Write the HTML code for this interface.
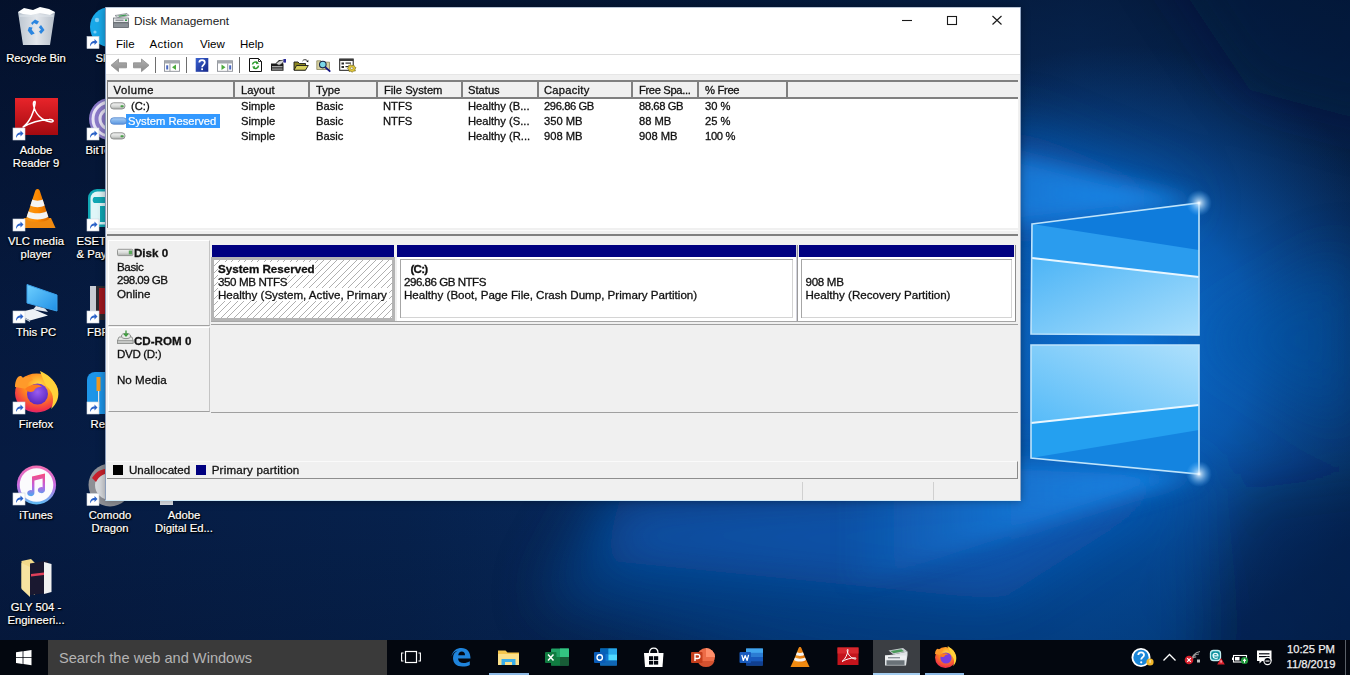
<!DOCTYPE html>
<html lang="en">
<head>
<meta charset="utf-8">
<title>Disk Management</title>
<style>
*{box-sizing:border-box;margin:0;padding:0}
html,body{width:1350px;height:675px;overflow:hidden}
body{position:relative;font-family:"Liberation Sans",sans-serif;font-size:11px;color:#000;background:#03163a}
.abs{position:absolute}
#wall{position:absolute;left:0;top:0;width:1350px;height:675px}
/* desktop icons */
.dlabel{position:absolute;width:90px;text-align:center;color:#fff;font-size:11.3px;line-height:13.2px;text-shadow:0 1px 2px #000,0 0 2px #000,1px 1px 1px #000;white-space:nowrap;-webkit-text-stroke:.2px #fff}
/* window */
#win{position:absolute;left:105px;top:7px;width:916px;height:494px;background:#f0f0f0;border-left:1px solid #8a9cba;border-right:1px solid #93a7c4;border-bottom:1px solid #cfe9f7;box-shadow:0 0 8px rgba(0,0,0,.35)}
#title{position:absolute;left:0;top:0;width:912px;height:27px;background:#fff}
#title .t{position:absolute;left:28px;top:6px;font-size:12px;color:#222}
#menu{position:absolute;left:0;top:27px;width:912px;height:19px;background:#fff}
#menu span{position:absolute;top:3px;font-size:11.5px}
#tbar{position:absolute;left:0;top:46px;width:912px;height:21px;background:#fff;border-top:1px solid #d8d8d8}
#list{position:absolute;left:0;top:73px;width:912px;height:148px;background:#fff;border-top:2px solid #828282}
#lhead{position:absolute;left:0;top:0;width:912px;height:15px;background:#f0f0f0;border-bottom:2px solid #828282}
.hc{position:absolute;top:0;height:13px;border-right:2px solid #828282;padding-left:5px;font-size:11px;line-height:14px;white-space:nowrap;overflow:hidden}
.row{position:absolute;left:0;height:15px;width:912px;font-size:11px;line-height:15px;white-space:nowrap}
.row span{position:absolute;top:0}

.ttl{font-size:11.8px;color:#222;white-space:nowrap;line-height:14px}
.mn{font-size:11.5px;white-space:nowrap;line-height:14px}
.lt{font-size:11.2px;line-height:14px;white-space:nowrap;color:#111;-webkit-text-stroke:.3px #111}
.gt{font-size:11.6px;line-height:13px;white-space:nowrap;color:#111;-webkit-text-stroke:.3px #111}
.b{font-weight:bold}
.hs{top:82px;width:2px;height:15px;background:#808080}
.dpanel{background:#f0f0f0;border-top:1px solid #fff;border-left:1px solid #fff;border-right:1px solid #c4c4c4;border-bottom:1px solid #a0a0a0}
.pbox{background:#fff;border:3px solid #fff;border-top-width:2px;box-shadow:inset 1px 1px 0 0 #a6a6a6, inset -1px -1px 0 0 #d4d4d4}
.hw{background:#fff}
#p1{border:3px solid #b4b4b4;background:#fff repeating-linear-gradient(135deg,#fff 0,#fff 3.9px,#b0b0b0 3.9px,#b0b0b0 4.6px)}
</style>
</head>
<body>
<svg id="wall" viewBox="0 0 1350 675">
<defs>
<linearGradient id="bg0" x1="0" y1="0" x2="1" y2="0"><stop offset="0" stop-color="#061b42"/><stop offset=".3" stop-color="#06224e"/><stop offset=".55" stop-color="#072e66"/><stop offset=".8" stop-color="#093c7e"/><stop offset="1" stop-color="#072c5e"/></linearGradient>
<linearGradient id="topdark" x1="0" y1="0" x2="0" y2="1"><stop offset="0" stop-color="#030a1c" stop-opacity=".6"/><stop offset=".45" stop-color="#030a1c" stop-opacity=".12"/><stop offset=".7" stop-color="#030a1c" stop-opacity="0"/><stop offset="1" stop-color="#030a1c" stop-opacity=".22"/></linearGradient>
<radialGradient id="glow1" cx="1120" cy="345" r="300" gradientUnits="userSpaceOnUse"><stop offset="0" stop-color="#0b72d6" stop-opacity="1"/><stop offset=".45" stop-color="#0a62be" stop-opacity=".8"/><stop offset="1" stop-color="#0a4a96" stop-opacity="0"/></radialGradient>
<linearGradient id="ptop" x1="0" y1="0" x2="1" y2="1"><stop offset="0" stop-color="#4cb4f6"/><stop offset="1" stop-color="#a8defc"/></linearGradient>
<linearGradient id="pbot" x1="0" y1="1" x2="1" y2="0"><stop offset="0" stop-color="#56bbf8"/><stop offset="1" stop-color="#aee0fc"/></linearGradient>
<radialGradient id="star" cx=".5" cy=".5" r=".5"><stop offset="0" stop-color="#fff" stop-opacity="1"/><stop offset=".2" stop-color="#cfeaff" stop-opacity=".75"/><stop offset="1" stop-color="#5bb6ff" stop-opacity="0"/></radialGradient>
<linearGradient id="beamF" x1="1199" y1="0" x2="840" y2="0" gradientUnits="userSpaceOnUse"><stop offset="0" stop-color="#1e90f0" stop-opacity=".95"/><stop offset=".5" stop-color="#1c8cee" stop-opacity=".6"/><stop offset="1" stop-color="#1c8cee" stop-opacity="0"/></linearGradient>
<filter id="bl20" filterUnits="userSpaceOnUse" x="-100" y="-100" width="1550" height="900"><feGaussianBlur stdDeviation="26"/></filter>
<filter id="bl8" filterUnits="userSpaceOnUse" x="700" y="0" width="650" height="675"><feGaussianBlur stdDeviation="10"/></filter>
</defs>
<rect width="1350" height="675" fill="url(#bg0)"/>
<rect width="1350" height="675" fill="url(#topdark)"/>
<rect width="1350" height="675" fill="url(#glow1)"/>
<!-- light beams -->
<g filter="url(#bl20)">
<polygon points="1199,474 600,490 540,600 900,700 1200,700" fill="#0a4c9c" opacity=".5"/>
<polygon points="1199,474 1000,470 620,500 600,560 1000,600" fill="#0b60c0" opacity=".6"/>
<polygon points="1240,490 1400,470 1400,700 1180,700" fill="#041a40" opacity=".45"/>
<polygon points="1150,-60 1400,-60 1400,130 1250,90" fill="#041a40" opacity=".4"/>
<polygon points="1199,203 1000,120 1000,250" fill="#0b66c8" opacity=".6"/>
<polygon points="1199,340 1350,250 1350,430" fill="#0b52a4" opacity=".5"/>
</g>
<g filter="url(#bl8)">
<polygon points="1199,203 840,110 840,245" fill="url(#beamF)"/>
<polygon points="1199,474 840,450 840,590" fill="url(#beamF)" opacity=".9"/>
</g>
<!-- top pane -->
<polygon points="1032,224 1199,203 1199,335 1031,334" fill="#2a9cee"/>
<polygon points="1032,224 1199,250 1199,203" fill="#0f7cdc"/>
<polygon points="1032,258 1199,277 1199,335 1031,334" fill="url(#ptop)"/>
<polyline points="1032,258 1199,277" stroke="#e8f6ff" stroke-width="2.2" fill="none"/>
<polygon points="1032,224 1199,203 1199,335 1031,334" fill="none" stroke="#bfe4fb" stroke-width="1.6"/>
<!-- bottom pane -->
<polygon points="1031,345 1199,345 1199,474 1031,458" fill="#24a0f0"/>
<polygon points="1031,345 1199,345 1199,405 1031,423" fill="url(#pbot)"/>
<polygon points="1031,458 1199,430 1199,474" fill="#1484e0"/>
<polyline points="1031,423 1199,405" stroke="#eaf7ff" stroke-width="2.2" fill="none"/>
<polygon points="1031,345 1199,345 1199,474 1031,458" fill="none" stroke="#bfe4fb" stroke-width="1.6"/>
<circle cx="1199" cy="203" r="13" fill="url(#star)"/>
<circle cx="1199" cy="474" r="13" fill="url(#star)"/>
</svg>
<!-- desktop icons -->
<svg class="abs" style="left:0;top:0" width="230" height="640" viewBox="0 0 230 640">
<defs>
<linearGradient id="binG" x1="0" y1="0" x2="1" y2="0"><stop offset="0" stop-color="#c9d3dc"/><stop offset=".5" stop-color="#f4f7fa"/><stop offset="1" stop-color="#c3ccd6"/></linearGradient>
<linearGradient id="redG" x1="0" y1="0" x2="0" y2="1"><stop offset="0" stop-color="#e8242a"/><stop offset="1" stop-color="#a30a10"/></linearGradient>
<linearGradient id="vlcG" x1="0" y1="0" x2="1" y2="0"><stop offset="0" stop-color="#f39a1d"/><stop offset=".5" stop-color="#ff8a00"/><stop offset="1" stop-color="#d96a00"/></linearGradient>
<radialGradient id="ffG" cx=".55" cy=".3" r=".75"><stop offset="0" stop-color="#ffe14a"/><stop offset=".45" stop-color="#ff8a1e"/><stop offset=".85" stop-color="#f0304a"/><stop offset="1" stop-color="#d4208a"/></radialGradient>
<radialGradient id="ffP" cx=".5" cy=".4" r=".6"><stop offset="0" stop-color="#9a5cf0"/><stop offset="1" stop-color="#5a28c0"/></radialGradient>
<linearGradient id="itR" x1="0" y1="0" x2="0" y2="1"><stop offset="0" stop-color="#f36fb0"/><stop offset=".5" stop-color="#c86ae0"/><stop offset="1" stop-color="#5ac0f5"/></linearGradient>
<linearGradient id="itN" x1="0" y1="0" x2="0" y2="1"><stop offset="0" stop-color="#fa4a7a"/><stop offset=".55" stop-color="#c060e0"/><stop offset="1" stop-color="#4aa8f0"/></linearGradient>
<linearGradient id="monG" x1="0" y1="0" x2="1" y2="1"><stop offset="0" stop-color="#6fd0ff"/><stop offset="1" stop-color="#1f8fe6"/></linearGradient>
<g id="sc"><rect x="0" y="0" width="12" height="12" fill="#fff" stroke="#d0d8e0" stroke-width=".6"/><path d="M3 10 C3 6 5 4.5 7.5 4.5 L7.5 2.5 L10.5 5.5 L7.5 8.5 L7.5 6.5 C5.5 6.5 4.3 7.6 3 10Z" fill="#2a62c8"/></g>
</defs>
<!-- recycle bin -->
<path d="M18 12 L55 12 L50 45 L23 45 Z" fill="url(#binG)" opacity=".93"/>
<path d="M18 12 L24 8 L33 10 L40 7 L49 9 L55 12 L50 15 L40 13 L31 15 L23 14 Z" fill="#fdfefe"/>
<path d="M19.5 16 L53.5 16" stroke="#dfe6ec" stroke-width="1"/>
<g fill="#2b86e0"><path d="M31 23 l4 -3.5 4 2 -2 3 -3 -1.5 -1.5 2z"/><path d="M41 25 l3.5 5 -3.5 4 -2 -2.5 2 -1.8 -2.2 -2.4z"/><path d="M29 27 l3.5 .5 -.8 2.2 3 3.8 -3.5 1.5 -3.5 -4.5z"/></g>
<!-- adobe reader -->
<rect x="15" y="98" width="43" height="37" fill="url(#redG)"/>
<path d="M23 127 C30 122 34 112 35 104 C36 100 33 101 33.5 105 C35 114 42 121 51 122 C55 122 53 119 49 119.500 C41 120 30 123 23 127Z" fill="none" stroke="#fff" stroke-width="1.5" stroke-linejoin="round"/>
<use href="#sc" x="13" y="128"/>
<!-- VLC -->
<path d="M20 228 L24 218 L51 218 L55.500 228 Z" fill="#f08a10"/>
<path d="M37.500 189 C36 189 35.500 190 35 191.500 L26 219 C30 223 45 223 49 219 L40 191.500 C39.500 190 39 189 37.500 189Z" fill="url(#vlcG)"/>
<path d="M32.300 199.500 C35 201 40 201 42.700 199.500 L44.600 205.500 C41 207.800 34 207.800 30.400 205.500Z" fill="#f4f4f4"/>
<path d="M28.500 211.200 C33 214 42 214 46.500 211.200 L48.300 216.800 C43 220.500 32 220.500 26.700 216.800Z" fill="#f4f4f4"/>
<use href="#sc" x="13" y="219"/>
<!-- This PC -->
<path d="M27 284.500 L57 295 L57 311 L27 303 Z" fill="url(#monG)" stroke="#3aa0ea" stroke-width="1"/>
<path d="M36 306 L45 308.500 L48 312 L33 309.500Z" fill="#dfe6ee"/>
<path d="M16 313 L33 309 L48 315.500 L30 320.500Z" fill="#eef2f6"/>
<path d="M16 313 L30 320.500 L30 322 L16 314.500Z" fill="#b8c4d0"/>
<use href="#sc" x="13" y="311"/>
<!-- Firefox -->
<ellipse cx="36.500" cy="393" rx="21.500" ry="19.500" fill="url(#ffG)"/>
<path d="M15 387 C15 378 20 373 23 378 C26 375.500 31 376.500 33 380 C28 381 26 385 27 389 Z" fill="#ff9a2a"/>
<path d="M40 371 C47 374 54 379 57.500 388 C60 396 57 404 51 409 C55 400 53 391 46 386 C44 381 42 377 40 371Z" fill="#ffd23a"/>
<circle cx="37.500" cy="394" r="10.500" fill="url(#ffP)"/>
<path d="M25 389 C30 384 38 383 42 387 C38 386.500 35 388 34 391 C31 393 27 392 25 389Z" fill="#ff7a1e"/>
<use href="#sc" x="13" y="402"/>
<!-- iTunes -->
<circle cx="36.500" cy="485" r="19.600" fill="url(#itR)"/>
<circle cx="36.500" cy="485" r="16.800" fill="#fbfbfd"/>
<path d="M32 476.500 L45 473.500 L45 490 A3.600 3 0 1 1 42.600 487.300 L42.600 478.500 L34.400 480.400 L34.400 493 A3.600 3 0 1 1 32 490.300 Z" fill="url(#itN)"/>
<use href="#sc" x="13" y="493"/>
<!-- GLY folder -->
<path d="M21.500 561 L31 559 L35 563 L35 595 L21.500 588Z" fill="#f2d98a"/>
<path d="M30 563.500 L48 560.500 L48 593 L30 595Z" fill="#1a1830"/>
<path d="M44 562 L51.500 564 L51.500 592 L44 594Z" fill="#f1f1f1"/>
<path d="M31 574 L44 572.500 L44 575 L31 576.500Z" fill="#e0405a"/>
<path d="M21.500 563 L30 567 L30 597 L21.500 589Z" fill="#f7e3a0"/>
<!-- column 2 partials -->
<circle cx="110" cy="27" r="20" fill="#19a8e8"/>
<circle cx="97" cy="20" r="2.200" fill="#7fd0f5"/><circle cx="95" cy="32" r="1.600" fill="#7fd0f5"/>
<use href="#sc" x="87" y="36.500"/>
<circle cx="110" cy="119" r="21" fill="#8a7ac8"/>
<circle cx="110" cy="119" r="17" fill="none" stroke="#e8e4f6" stroke-width="3"/>
<circle cx="110" cy="119" r="10" fill="none" stroke="#e8e4f6" stroke-width="3"/>
<use href="#sc" x="87" y="128"/>
<rect x="88" y="189" width="44" height="38" rx="9" fill="#10a7b4"/>
<rect x="90.500" y="191.500" width="39" height="33" rx="7" fill="#dff6f8"/>
<path d="M94 197 h10 a4 4 0 0 1 4 4 v2 h-14 a4 4 0 0 1 0 -6z" fill="#10a7b4"/>
<rect x="100" y="206" width="8" height="16" fill="#10a7b4"/>
<use href="#sc" x="87" y="219"/>
<rect x="90" y="286" width="34" height="34" fill="#2a2a30"/>
<rect x="90" y="286" width="6" height="34" fill="#c8ccd4"/>
<rect x="99" y="288" width="8" height="26" fill="#a01820"/>
<use href="#sc" x="87" y="311"/>
<rect x="87" y="372" width="44" height="42" rx="8" fill="#1d95e8"/>
<rect x="96.500" y="377" width="4" height="14" fill="#f59a1e"/><rect x="98" y="391" width="1.200" height="16" fill="#e8e8e8"/>
<use href="#sc" x="87" y="402"/>
<circle cx="110" cy="485" r="21.500" fill="#8e9096"/>
<circle cx="110" cy="485" r="15" fill="#d8dade"/>
<path d="M92 478 C97 470 104 468 112 469 L112 473 C104 473 99 476 96 482Z" fill="#c8202c"/>
<use href="#sc" x="87" y="493.500"/>
<rect x="160" y="496" width="13" height="9" fill="#dfe4ea"/>
</svg>
<div class="dlabel" style="left:-9px;top:52px">Recycle Bin</div>
<div class="dlabel" style="left:-9px;top:144px">Adobe<br>Reader 9</div>
<div class="dlabel" style="left:-9px;top:235px">VLC media<br>player</div>
<div class="dlabel" style="left:-9px;top:326px">This PC</div>
<div class="dlabel" style="left:-9px;top:418px">Firefox</div>
<div class="dlabel" style="left:-9px;top:509px">iTunes</div>
<div class="dlabel" style="left:-9px;top:601px">GLY 504 -<br>Engineeri...</div>
<div class="dlabel" style="left:95.5px;top:52px;text-align:left">Skype</div>
<div class="dlabel" style="left:85.5px;top:144px;text-align:left">BitTorrent</div>
<div class="dlabel" style="left:76.5px;top:235px;text-align:left">ESET Banking<br>&amp; Payment...</div>
<div class="dlabel" style="left:87px;top:326px;text-align:left">FBReader</div>
<div class="dlabel" style="left:90.5px;top:418px;text-align:left">Reimage</div>
<div class="dlabel" style="left:65px;top:509px">Comodo<br>Dragon</div>
<div class="dlabel" style="left:139px;top:509px">Adobe<br>Digital Ed...</div>
<div id="win"></div>
<div class="abs" style="left:106px;top:7px;width:914px;height:27px;background:#fff"></div>
<div class="abs" style="left:106px;top:7px;width:914px;height:1px;background:#b9c5d6"></div>
<div class="abs ttl" style="left:134px;top:14px">Disk Management</div>
<div class="abs" style="left:106px;top:34px;width:914px;height:20px;background:#fff"></div>
<div class="abs mn" style="left:116px;top:37px">File</div>
<div class="abs mn" style="left:149.5px;top:37px;letter-spacing:.35px">Action</div>
<div class="abs mn" style="left:200px;top:37px">View</div>
<div class="abs mn" style="left:240px;top:37px">Help</div>
<div class="abs" style="left:106px;top:54px;width:914px;height:1px;background:#dcdcdc"></div>
<div class="abs" style="left:106px;top:55px;width:914px;height:19px;background:#fff"></div>
<div class="abs" style="left:106px;top:74px;width:914px;height:1px;background:#e6e6e6"></div>
<!-- list -->
<div class="abs" style="left:107px;top:80px;width:911px;height:2px;background:#808080"></div>
<div class="abs" style="left:107px;top:82px;width:911px;height:15px;background:#f0f0f0"></div>
<div class="abs" style="left:107px;top:80px;width:1px;height:148px;background:#808080"></div>
<div class="abs" style="left:107px;top:97px;width:911px;height:2px;background:#808080"></div>
<div class="abs" style="left:108px;top:99px;width:910px;height:129px;background:#fff"></div>
<div class="abs hs" style="left:233px"></div><div class="abs hs" style="left:308px"></div><div class="abs hs" style="left:376px"></div><div class="abs hs" style="left:461px"></div><div class="abs hs" style="left:537px"></div><div class="abs hs" style="left:631px"></div><div class="abs hs" style="left:697px"></div><div class="abs hs" style="left:786px"></div>
<div class="abs lt" style="left:113.5px;top:83px;letter-spacing:.55px">Volume</div>
<div class="abs lt" style="left:241px;top:83px">Layout</div>
<div class="abs lt" style="left:316px;top:83px">Type</div>
<div class="abs lt" style="left:384px;top:83px">File System</div>
<div class="abs lt" style="left:468px;top:83px">Status</div>
<div class="abs lt" style="left:544px;top:83px;letter-spacing:.25px">Capacity</div>
<div class="abs lt" style="left:639px;top:83px;letter-spacing:-.35px">Free Spa...</div>
<div class="abs lt" style="left:705px;top:83px;letter-spacing:-.3px">% Free</div>
<!-- rows -->
<div class="abs" style="left:126px;top:114px;width:94px;height:14px;background:#3399ff"></div>
<div class="abs lt" style="left:131px;top:99px">(C:)</div>
<div class="abs lt" style="left:128px;top:114px;color:#fff;-webkit-text-stroke:.2px #fff">System Reserved</div>
<div class="abs lt" style="left:241px;top:99px">Simple</div><div class="abs lt" style="left:241px;top:114px">Simple</div><div class="abs lt" style="left:241px;top:129px">Simple</div>
<div class="abs lt" style="left:316px;top:99px">Basic</div><div class="abs lt" style="left:316px;top:114px">Basic</div><div class="abs lt" style="left:316px;top:129px">Basic</div>
<div class="abs lt" style="left:383px;top:99px">NTFS</div><div class="abs lt" style="left:383px;top:114px">NTFS</div>
<div class="abs lt" style="left:468px;top:99px">Healthy (B...</div><div class="abs lt" style="left:468px;top:114px">Healthy (S...</div><div class="abs lt" style="left:468px;top:129px">Healthy (R...</div>
<div class="abs lt" style="left:544px;top:99px;letter-spacing:-.4px">296.86 GB</div><div class="abs lt" style="left:544px;top:114px">350 MB</div><div class="abs lt" style="left:544px;top:129px">908 MB</div>
<div class="abs lt" style="left:639px;top:99px;letter-spacing:-.4px">88.68 GB</div><div class="abs lt" style="left:639px;top:114px">88 MB</div><div class="abs lt" style="left:639px;top:129px">908 MB</div>
<div class="abs lt" style="left:705px;top:99px">30 %</div><div class="abs lt" style="left:705px;top:114px">25 %</div><div class="abs lt" style="left:705px;top:129px;letter-spacing:-.3px">100 %</div>
<!-- splitter -->
<div class="abs" style="left:107px;top:230px;width:911px;height:1px;background:#fbfbfb"></div>
<div class="abs" style="left:107px;top:234px;width:911px;height:2px;background:#808080"></div>
<!-- disk 0 -->
<div class="abs dpanel" style="left:108px;top:240px;width:102px;height:86px"></div>
<div class="abs gt b" style="left:134px;top:246px">Disk 0</div>
<div class="abs gt" style="left:117px;top:260px;letter-spacing:-.4px">Basic</div>
<div class="abs gt" style="left:117px;top:273px;letter-spacing:-.55px">298.09 GB</div>
<div class="abs gt" style="left:117px;top:287px">Online</div>
<div class="abs" style="left:211px;top:240px;width:807px;height:85px;background:#f0f0f0;border-bottom:1px solid #a0a0a0"></div>
<div class="abs" style="left:212px;top:245px;width:182px;height:12px;background:#000080"></div>
<div class="abs" style="left:397px;top:245px;width:399px;height:12px;background:#000080"></div>
<div class="abs" style="left:799px;top:245px;width:215px;height:12px;background:#000080"></div>
<div class="abs" id="p1" style="left:211px;top:257px;width:184px;height:64px"></div>
<div class="abs pbox" style="left:397px;top:257px;width:399px;height:64px"></div>
<div class="abs pbox" style="left:798px;top:257px;width:217px;height:64px"></div>
<div class="abs" style="left:796px;top:245px;width:1px;height:76px;background:#d2d2dc"></div><div class="abs" style="left:797px;top:245px;width:1px;height:76px;background:#9a9a9a"></div>
<div class="abs" style="left:1015px;top:245px;width:1px;height:76px;background:#8c8c8c"></div>
<div class="abs" style="left:211px;top:321px;width:805px;height:1px;background:#a6a6a6"></div>
<div class="abs gt b hw" style="left:218px;top:262px">System Reserved</div>
<div class="abs gt hw" style="left:218px;top:275px;letter-spacing:-.4px">350 MB NTFS</div>
<div class="abs gt hw" style="left:218px;top:288px;width:171px;overflow:hidden">Healthy (System, Active, Primary Partition)</div>
<div class="abs gt b" style="left:410.5px;top:262px;letter-spacing:-.8px">(C:)</div>
<div class="abs gt" style="left:404px;top:275px;letter-spacing:-.5px">296.86 GB NTFS</div>
<div class="abs gt" style="left:404px;top:288px">Healthy (Boot, Page File, Crash Dump, Primary Partition)</div>
<div class="abs gt" style="left:805.5px;top:275px;letter-spacing:-.3px">908 MB</div>
<div class="abs gt" style="left:805.5px;top:288px">Healthy (Recovery Partition)</div>
<!-- cd-rom 0 -->
<div class="abs dpanel" style="left:108px;top:327px;width:102px;height:85px"></div>
<div class="abs gt b" style="left:134px;top:334px">CD-ROM 0</div>
<div class="abs gt" style="left:117px;top:347px;letter-spacing:-.35px">DVD (D:)</div>
<div class="abs gt" style="left:117px;top:373px">No Media</div>
<div class="abs" style="left:211px;top:412px;width:807px;height:1px;background:#a0a0a0"></div>
<!-- legend -->
<div class="abs" style="left:107px;top:461px;width:911px;height:18px;background:#f0f0f0;border-top:1px solid #fafafa;border-right:1px solid #8a8a8a;border-bottom:1px solid #8e8e8e"></div>
<div class="abs" style="left:113px;top:465px;width:10px;height:10px;background:#000"></div>
<div class="abs gt" style="left:129px;top:463px">Unallocated</div>
<div class="abs" style="left:196px;top:465px;width:10px;height:10px;background:#000080"></div>
<div class="abs gt" style="left:211.700px;top:463px;letter-spacing:.2px">Primary partition</div>
<!-- status bar -->
<div class="abs" style="left:802px;top:482px;width:1px;height:18px;background:#d0d0d0"></div>
<div class="abs" style="left:933px;top:482px;width:1px;height:18px;background:#d0d0d0"></div>
<!-- window chrome icons -->
<svg class="abs" style="left:106px;top:7px" width="914" height="70" viewBox="106 7 914 70">
<defs>
<linearGradient id="hlp" x1="0" y1="0" x2="1" y2="1"><stop offset="0" stop-color="#3a62d0"/><stop offset="1" stop-color="#16288a"/></linearGradient>
<linearGradient id="arw" x1="0" y1="0" x2="0" y2="1"><stop offset="0" stop-color="#b0b0b0"/><stop offset="1" stop-color="#8a8a8a"/></linearGradient>
</defs>
<!-- title icon -->
<path d="M115 15.500 L127 13.500 L129 15.500 L117.500 17.800Z" fill="#d5d8db" stroke="#7a8086" stroke-width=".7"/>
<path d="M118 15.800 L126 14.500 L127 15.500 L119.500 16.800Z" fill="#3c9a50"/>
<rect x="113.500" y="18" width="15" height="4.500" fill="#e4e6e8" stroke="#70767c" stroke-width=".8"/>
<rect x="113.500" y="22.800" width="15" height="4.700" fill="#8a9096" stroke="#5a6066" stroke-width=".8"/>
<rect x="115.500" y="19.600" width="8" height="1.300" fill="#8a9096"/>
<rect x="125" y="19.400" width="2" height="1.600" fill="#3c9a50"/>
<!-- caption buttons -->
<path d="M902 20.500 H912" stroke="#1a1a1a" stroke-width="1.100"/>
<rect x="947.500" y="16.500" width="9" height="8" fill="none" stroke="#1a1a1a" stroke-width="1.100"/>
<path d="M992.500 16 L1001.500 24.500 M1001.500 16 L992.500 24.500" stroke="#1a1a1a" stroke-width="1.150"/>
<!-- toolbar -->
<path d="M111 65.300 L118.500 59 L118.500 62.800 L126.500 62.800 L126.500 67.800 L118.500 67.800 L118.500 71.600Z" fill="url(#arw)" stroke="#8c8c8c" stroke-width=".8" stroke-linejoin="round"/>
<path d="M149 65.300 L141.500 59 L141.500 62.800 L133.500 62.800 L133.500 67.800 L141.500 67.800 L141.500 71.600Z" fill="url(#arw)" stroke="#8c8c8c" stroke-width=".8" stroke-linejoin="round"/>
<rect x="155" y="57" width="1" height="16" fill="#6e6e6e"/>
<rect x="186" y="57" width="1" height="16" fill="#6e6e6e"/>
<rect x="239" y="57" width="1" height="16" fill="#6e6e6e"/>
<!-- console tree icon -->
<rect x="164.500" y="60.800" width="15" height="10.500" fill="#fff" stroke="#8a8e96" stroke-width=".9"/>
<rect x="164.500" y="60.800" width="15" height="2.700" fill="#a4a8ae"/>
<rect x="169.500" y="63.500" width=".9" height="7.800" fill="#8a8e96"/>
<rect x="166.200" y="65.300" width="2" height="4.200" fill="#4a68c0"/>
<path d="M172 67.300 L176 64.500 L176 70.100Z" fill="#4caa3c"/>
<!-- help -->
<rect x="195.700" y="58" width="12.600" height="13.800" fill="url(#hlp)"/>
<path d="M199.300 62.600 C199.300 59.300 204.800 59.300 204.800 62.600 C204.800 64.700 202.100 64.900 202.100 67.200" fill="none" stroke="#fff" stroke-width="1.700"/>
<rect x="201.200" y="68.300" width="1.800" height="1.800" fill="#fff"/>
<!-- action pane icon -->
<rect x="217.500" y="60.800" width="15" height="10.500" fill="#fff" stroke="#8a8e96" stroke-width=".9"/>
<rect x="217.500" y="60.800" width="15" height="2.700" fill="#a4a8ae"/>
<rect x="227.300" y="63.500" width=".9" height="7.800" fill="#8a8e96"/>
<rect x="229.200" y="65.300" width="2" height="4.200" fill="#4a68c0"/>
<path d="M225.500 67.300 L221.500 64.500 L221.500 70.100Z" fill="#4caa3c"/>
<!-- refresh doc -->
<path d="M249.500 58.500 L258.500 58.500 L261.500 61.500 L261.500 71.500 L249.500 71.500Z" fill="#fff" stroke="#111" stroke-width="1"/>
<path d="M258.500 58.500 L258.500 61.500 L261.500 61.500" fill="none" stroke="#111" stroke-width=".8"/>
<path d="M252.500 64.500 A3 3 0 0 1 257.500 62.800 M258.500 65.700 A3 3 0 0 1 253.500 67.600" fill="none" stroke="#2a9a2a" stroke-width="1.500"/>
<path d="M256.600 61.300 L259 63.600 L256 64.300Z M254.400 69 L252 66.700 L255 66.100Z" fill="#2a9a2a"/>
<!-- properties -->
<path d="M271 63.500 L275.500 63.500 L279 60 L283 60 L283 63.500 L283.500 63.500 L283.500 70.800 L271 70.800Z" fill="#1c1c1c"/>
<path d="M276 63.500 L279.500 61 L285 59.500 L282 63.500 L279 65.200Z" fill="#d8d8d8" stroke="#444" stroke-width=".5"/>
<rect x="283.500" y="59" width="2.500" height="3.600" fill="#2a2a9a"/>
<rect x="272" y="66.200" width="10.500" height="1.100" fill="#c8c8c8"/>
<rect x="272" y="68.300" width="10.500" height="1.600" fill="#8a8a8a"/>
<!-- open folder -->
<path d="M294 62 L298 62 L299.500 63.500 L305.500 63.500 L305.500 70 L294 70Z" fill="#8a8420" stroke="#1a1a1a" stroke-width=".9"/>
<path d="M296.500 65.500 L308.300 65.500 L305.500 70.200 L294 70.200Z" fill="#d6cf5a" stroke="#1a1a1a" stroke-width=".9"/>
<path d="M302.500 61 C303.500 59.300 306 59.300 307.200 60.600" fill="none" stroke="#1a1a1a" stroke-width=".9"/>
<path d="M306.300 61.800 L308.300 59.800 L308.300 62.300Z" fill="#1a1a1a"/>
<!-- find -->
<path d="M316.800 60.800 L321 60.800 L322.300 62.200 L329.500 62.200 L329.500 69.500 L316.800 69.500Z" fill="#d8d2a0" stroke="#8a8660" stroke-width=".8"/>
<circle cx="322.800" cy="64.600" r="3.300" fill="#7ad8e8" stroke="#1a2a4a" stroke-width="1.100"/>
<path d="M325.300 67.200 L330.300 71.600" stroke="#141480" stroke-width="1.800"/>
<!-- settings list -->
<rect x="339.700" y="59" width="13.500" height="11.300" fill="#fff" stroke="#1a1a1a" stroke-width="1"/>
<rect x="339.700" y="59" width="13.500" height="2" fill="#3a3a3a"/>
<g fill="#2a2a2a"><rect x="341.500" y="62.500" width="2.500" height="2"/><rect x="345.500" y="62.500" width="5.500" height="1.200"/><rect x="341.500" y="66" width="2.500" height="2"/><rect x="345.500" y="66" width="3" height="1.200"/></g>
<path d="M350.500 64.500 L352 65.700 L353.800 65 L354.500 66.800 L356 67.600 L355 69.200 L355.400 71 L353.500 71 L352.300 72.300 L350.900 71.200 L349 71.400 L348.800 69.600 L347.400 68.400 L348.700 67 L348.700 65.200 L350.500 65.400Z" fill="#e0c83a" stroke="#6a5a10" stroke-width=".6"/>
<circle cx="351.800" cy="68.300" r="1.200" fill="#fff" stroke="#6a5a10" stroke-width=".5"/>
</svg>
<!-- drive icons in list + disk labels -->
<svg class="abs" style="left:106px;top:98px" width="110" height="260" viewBox="106 98 110 260">
<defs>
<linearGradient id="drv" x1="0" y1="0" x2="0" y2="1"><stop offset="0" stop-color="#f4f4f4"/><stop offset=".55" stop-color="#d8dad8"/><stop offset="1" stop-color="#a8aaa8"/></linearGradient>
<linearGradient id="drvs" x1="0" y1="0" x2="0" y2="1"><stop offset="0" stop-color="#a8cef5"/><stop offset="1" stop-color="#5a96e0"/></linearGradient>
</defs>
<rect x="110.500" y="102.800" width="14.500" height="6.200" rx="3" fill="url(#drv)" stroke="#8a8c8a" stroke-width=".9"/>
<rect x="120.500" y="105.200" width="3.200" height="2" rx=".8" fill="#4aa04a"/>
<rect x="110.500" y="117.800" width="16" height="6.400" rx="3" fill="url(#drvs)" stroke="#5a8ad0" stroke-width=".9"/>
<rect x="110.500" y="132.800" width="14.500" height="6.200" rx="3" fill="url(#drv)" stroke="#8a8c8a" stroke-width=".9"/>
<rect x="120.500" y="135.200" width="3.200" height="2" rx=".8" fill="#4aa04a"/>
<!-- Disk 0 icon -->
<rect x="117.500" y="249.300" width="15.300" height="6.300" rx="1" fill="url(#drv)" stroke="#8a8c8a" stroke-width=".9"/>
<rect x="128.800" y="250.500" width="3.200" height="3.800" fill="#5aa85a"/>
<!-- CD-ROM icon -->
<path d="M119 337 L132 337 L133 340.500 L133 343.500 L117.500 343.500 L117.500 340.500Z" fill="#e6e8e6" stroke="#8a8c8a" stroke-width=".9"/>
<rect x="117.500" y="340.300" width="15.500" height="3.200" fill="#c4c6c4" stroke="#8a8c8a" stroke-width=".7"/>
<ellipse cx="126" cy="336" rx="4.500" ry="2.600" fill="#e8eae8" stroke="#7a7c7a" stroke-width=".8"/>
<path d="M126 330.500 L126 336 M123.800 333.600 L126 336 L128.200 333.600" fill="none" stroke="#3a9a3a" stroke-width="1.300"/>
</svg>
<!-- taskbar -->
<div class="abs" style="left:0;top:640px;width:1350px;height:35px;background:#03070f"></div>
<div class="abs" style="left:48px;top:640px;width:339px;height:35px;background:#3a3a3a"></div>
<div class="abs" style="left:59px;top:650px;font-size:14.6px;line-height:17px;color:#b4b4b4;white-space:nowrap">Search the web and Windows</div>
<div class="abs" style="left:873px;top:640px;width:47px;height:35px;background:#3b3e43"></div>
<div class="abs" style="left:489px;top:673px;width:40px;height:2px;background:#8db9e4"></div>
<div class="abs" style="left:873px;top:673px;width:47px;height:2px;background:#a4cdf0"></div>
<div class="abs" style="left:925px;top:673px;width:39px;height:2px;background:#8db9e4"></div>
<svg class="abs" style="left:0;top:640px" width="1350" height="35" viewBox="0 640 1350 35">
<defs>
<linearGradient id="tvlc" x1="0" y1="0" x2="1" y2="0"><stop offset="0" stop-color="#f6a02a"/><stop offset="1" stop-color="#e06a00"/></linearGradient>
<radialGradient id="tff" cx=".55" cy=".3" r=".75"><stop offset="0" stop-color="#ffe14a"/><stop offset=".45" stop-color="#ff8a1e"/><stop offset=".9" stop-color="#f0304a"/></radialGradient>
</defs>
<!-- start -->
<g fill="#fff"><path d="M16 652.200 L22.600 651.300 L22.600 657.200 L16 657.200Z"/><path d="M23.400 651.200 L31.500 650 L31.500 657.200 L23.400 657.200Z"/><path d="M16 658 L22.600 658 L22.600 663.900 L16 663Z"/><path d="M23.400 658 L31.500 658 L31.500 665.200 L23.400 664Z"/></g>
<!-- task view -->
<rect x="405.500" y="651.500" width="11" height="11" fill="none" stroke="#fff" stroke-width="1.200"/>
<path d="M403.500 653 H401.600 V661 H403.500 M418.500 653 H420.400 V661 H418.500" fill="none" stroke="#fff" stroke-width="1.100"/>
<!-- edge -->
<path d="M451.500 656.500 C452.500 650.500 457 648 461.500 648 C467 648 470.500 652 470.500 658.500 L458 658.500 C458.300 661.500 460.500 663 463.500 663 C466 663 468 662.300 469.800 661.200 L469.800 665 C467.800 666 465.500 666.500 462.500 666.500 C456.500 666.500 453 663 453 658 C453 654.500 455 651.800 457.800 650.600 C454.800 651.200 452.800 653.500 451.500 656.500Z M458.200 655.200 L465 655.200 C465 652.800 463.800 651.500 461.800 651.500 C459.800 651.500 458.500 653 458.200 655.200Z" fill="#1f84dc" fill-rule="evenodd"/>
<!-- explorer -->
<path d="M498 650.500 L505.500 650.500 L507.500 652.500 L519 652.500 L519 665 L498 665Z" fill="#f4c64e"/>
<rect x="498" y="654" width="21" height="11" fill="#fbe08a"/>
<path d="M501.500 665 L501.500 659 L515.500 659 L515.500 665 L512 665 L512 662 L505 662 L505 665Z" fill="#3aaeea"/>
<!-- excel -->
<rect x="551" y="648.500" width="18" height="17" rx="1" fill="#21a366"/>
<rect x="560" y="648.500" width="9" height="8.500" fill="#33c481"/>
<rect x="551" y="657" width="9" height="8.500" fill="#107c41"/><rect x="560" y="657" width="9" height="8.500" fill="#185c37"/>
<rect x="545" y="652" width="11.500" height="11" rx="1" fill="#107c41"/>
<path d="M548 654.500 L553.500 660.500 M553.500 654.500 L548 660.500" stroke="#fff" stroke-width="1.500"/>
<!-- outlook -->
<rect x="600" y="648.500" width="17" height="17" rx="1" fill="#1490df"/>
<rect x="600" y="648.500" width="8.500" height="6" fill="#0364b8"/><rect x="608.500" y="648.500" width="8.500" height="6" fill="#28a8ea"/>
<rect x="600" y="654.500" width="8.500" height="6" fill="#0f78d4"/><rect x="608.500" y="654.500" width="8.500" height="6" fill="#50d9ff"/>
<path d="M600 660.500 L617 660.500 L617 665.500 L600 665.500Z" fill="#1066b5"/>
<rect x="594" y="652" width="11.500" height="11" rx="1" fill="#0a5cb8"/>
<circle cx="599.700" cy="657.500" r="2.700" fill="none" stroke="#fff" stroke-width="1.400"/>
<!-- store -->
<path d="M644 653 L663.500 653 L662.500 667 L645 667Z" fill="#fff"/>
<path d="M649.500 653 C649.500 646.500 658 646.500 658 653" fill="none" stroke="#fff" stroke-width="1.300"/>
<g fill="#03070f"><rect x="649" y="656.200" width="4.200" height="3.800"/><rect x="654" y="656.200" width="4.200" height="3.800"/><rect x="649" y="660.800" width="4.200" height="3.800"/><rect x="654" y="660.800" width="4.200" height="3.800"/></g>
<!-- powerpoint -->
<circle cx="706" cy="657" r="9" fill="#ed6c47"/>
<path d="M706 648 A9 9 0 0 1 715 657 L706 657Z" fill="#ff8f6b"/>
<path d="M697.500 661 A9 9 0 0 0 714.500 661Z" fill="#d35230"/>
<rect x="691" y="652" width="11.500" height="11" rx="1" fill="#c43e1c"/>
<path d="M695 661 L695 654.500 L697.800 654.500 A2 2 0 0 1 697.800 658.500 L695 658.500" fill="none" stroke="#fff" stroke-width="1.400"/>
<!-- word -->
<rect x="746" y="648.500" width="17" height="17" rx="1" fill="#2b7cd3"/>
<rect x="746" y="648.500" width="17" height="4.300" fill="#41a5ee"/><rect x="746" y="657" width="17" height="4.300" fill="#185abd"/><rect x="746" y="661.200" width="17" height="4.300" fill="#103f91"/>
<rect x="739.500" y="652" width="11.500" height="11" rx="1" fill="#185abd"/>
<path d="M741.800 654.800 L743.300 660.500 L745.200 655.500 L747.100 660.500 L748.600 654.800" fill="none" stroke="#fff" stroke-width="1.200" stroke-linejoin="round"/>
<!-- vlc -->
<path d="M790.500 667 L793.500 660.500 L806.500 660.500 L809.500 667Z" fill="#f08a10"/>
<path d="M800 647 C799 647 798.700 647.600 798.400 648.500 L793.500 661 C796 663.300 804 663.300 806.500 661 L801.600 648.500 C801.300 647.600 801 647 800 647Z" fill="url(#tvlc)"/>
<path d="M797 652.300 C798.500 653.100 801.500 653.100 803 652.300 L804 655 C802 656.200 798 656.200 796 655Z" fill="#f4f4f4"/>
<path d="M795 657.500 C797.500 659 802.500 659 805 657.500 L806 660 C803 662 797 662 794 660Z" fill="#f4f4f4"/>
<!-- adobe -->
<rect x="837.500" y="647.500" width="21" height="17.500" fill="#c4141c"/>
<rect x="837.500" y="647.500" width="21" height="6" fill="#d8282e"/>
<path d="M842 661.500 C845.500 659 847.500 654 848 650.500 C848.300 648.800 847 649 847.200 650.800 C848 655 851.500 658.500 855 659 C857 659.200 856 657.600 854.500 657.800 C850.500 658 845.500 659.500 842 661.500Z" fill="none" stroke="#fff" stroke-width="1" stroke-linejoin="round"/>
<!-- disk mgmt -->
<path d="M888.500 650.500 L903 648 L907.500 651.500 L893.500 654.500Z" fill="#c8ccd0"/>
<path d="M890.500 651 L901.500 649.200 L904 651.200 L893.500 653.200Z" fill="#4a9a5a"/>
<path d="M885 655.500 L893.500 654.500 L907.500 651.500 L907.500 655 L906 665.500 L885 665.500Z" fill="#dfe3e6"/>
<rect x="885" y="655.500" width="21" height="4.200" fill="#eef0f2"/>
<rect x="886.500" y="660.300" width="18" height="4.600" fill="#6a7278"/>
<rect x="888" y="657" width="12" height="1.400" fill="#8a9298"/>
<!-- firefox -->
<circle cx="945.500" cy="657.500" r="10.500" fill="url(#tff)"/>
<path d="M947.500 646 C951 648 954.500 650.500 956 655.500 C957 660 955.500 664 953 666 C955 662 954 657.500 951 655 C950 652 949 649 947.500 646Z" fill="#ffd23a"/>
<path d="M935 654 C935 649.500 938 647.500 939 649.500 C940.500 648.500 942.500 649 943.500 650.500 C941 651 940 653 940.500 655Z" fill="#ff9a2a"/>
<circle cx="946" cy="658" r="5.600" fill="#7a3ee0"/>
<path d="M939.500 655.500 C942 653 946 652.500 948.500 654.500 C946.500 654.300 945 655 944.300 656.500 C942.800 657.500 940.800 657 939.500 655.500Z" fill="#ff7a1e"/>
<!-- tray: help -->
<circle cx="1141" cy="657.500" r="8.600" fill="#1a86d8" stroke="#fff" stroke-width="1.800"/>
<path d="M1138.300 655 C1138.300 651.500 1144 651.500 1144 655 C1144 657 1141.200 657.300 1141.200 659.600" fill="none" stroke="#fff" stroke-width="1.800"/>
<circle cx="1141.200" cy="662.300" r="1.100" fill="#fff"/>
<circle cx="1150" cy="662" r="3.600" fill="#f0b62a"/><rect x="1149.600" y="659.800" width=".9" height="3" fill="#fff"/>
<!-- chevron -->
<path d="M1163.500 660.500 L1169.500 654.500 L1175.500 660.500" fill="none" stroke="#fff" stroke-width="1.300"/>
<!-- network -->
<path d="M1191 662 A8 8 0 0 1 1199 654 M1191 662 A5.200 5.200 0 0 1 1196.200 656.800 M1191 662 A11 11 0 0 1 1200 651.500" fill="none" stroke="#9a9a9a" stroke-width="1.200"/>
<rect x="1197" y="659.500" width="3" height="3" fill="#bdbdbd"/>
<circle cx="1189" cy="660" r="4.300" fill="#d8202c"/>
<path d="M1187.200 658.200 L1190.800 661.800 M1190.800 658.200 L1187.200 661.800" stroke="#fff" stroke-width="1.200"/>
<!-- eset -->
<rect x="1210.500" y="650.500" width="10" height="10" rx="3" fill="#0c8f9c" stroke="#bfeef2" stroke-width="1.300"/>
<path d="M1213 655.800 H1218 C1218 652.600 1213 652.600 1213 655.800 C1213 658.800 1216.800 658.800 1217.800 657.600" fill="none" stroke="#e8fbfc" stroke-width="1.200"/>
<path d="M1221 658 L1224.800 664.500 L1217.200 664.500Z" fill="#e0222e"/><rect x="1220.600" y="660.300" width=".9" height="2.300" fill="#fff"/>
<!-- battery -->
<rect x="1233.500" y="655.500" width="13" height="6.500" fill="none" stroke="#fff" stroke-width="1.100"/>
<rect x="1235" y="657" width="4.500" height="3.500" fill="#fff"/><rect x="1232" y="657.500" width="1.500" height="2.500" fill="#fff"/>
<circle cx="1244.500" cy="660.500" r="3.600" fill="#1f9a3c"/><path d="M1244.500 658.300 L1246.300 661 H1245 V662.800 H1244 V661 H1242.700Z" fill="#fff"/>
<!-- notification -->
<path d="M1257 650.500 H1271.500 V661 H1262 L1259.500 663.500 V661 H1257Z" fill="#fff"/>
<rect x="1259" y="653.200" width="10.500" height="1.200" fill="#03070f"/><rect x="1259" y="656" width="10.500" height="1.200" fill="#03070f"/>
<circle cx="1267.500" cy="661" r="3.600" fill="#03070f" stroke="#fff" stroke-width="1.100"/><rect x="1265.500" y="660.500" width="4" height="1.100" fill="#fff"/>
<rect x="1345" y="640" width="1" height="35" fill="#5a6068"/>
</svg>
<div class="abs" style="left:1281px;top:642px;width:60px;text-align:center;font-size:11.2px;line-height:14.6px;color:#f0f0f0;-webkit-text-stroke:.25px #f0f0f0;white-space:nowrap">10:25 PM<br>11/8/2019</div>
</body>
</html>
